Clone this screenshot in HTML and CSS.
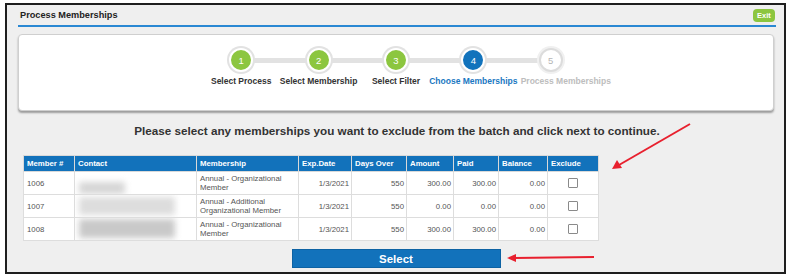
FILE: index.html
```html
<!DOCTYPE html>
<html>
<head>
    <title>Process Memberships</title>
    <link rel="stylesheet" href="styles.css">
</head>
<body>
<div class="frame">
    <!--title bar-->
    <div class="titlebar">
        <span class="title">Process Memberships</span>
        <a href="#" class="exit-btn">Exit</a>
    </div>

    <!--wizard steps-->
    <div class="wizard-panel">
        <ol class="steps">
            <li class="step done"><span class="dot">1</span><span class="label">Select Process</span></li>
            <li class="step done"><span class="dot">2</span><span class="label">Select Membership</span></li>
            <li class="step done"><span class="dot">3</span><span class="label">Select Filter</span></li>
            <li class="step current"><span class="dot">4</span><span class="label">Choose Memberships</span></li>
            <li class="step todo"><span class="dot">5</span><span class="label">Process Memberships</span></li>
        </ol>
    </div>

    <p class="instructions">Please select any memberships you want to exclude from the batch and click next to continue.</p>

    <table class="grid">
        <thead>
            <tr>
                <th class="c-num">Member #</th>
                <th class="c-contact">Contact</th>
                <th class="c-membership">Membership</th>
                <th class="c-date">Exp.Date</th>
                <th class="c-days">Days Over</th>
                <th class="c-amount">Amount</th>
                <th class="c-paid">Paid</th>
                <th class="c-balance">Balance</th>
                <th class="c-exclude">Exclude</th>
            </tr>
        </thead>
        <tbody>
            <tr>
                <td>1006</td>
                <td class="contact"><span class="smudge smudge-a"></span></td>
                <td>Annual - Organizational Member</td>
                <td class="right">1/3/2021</td>
                <td class="right">550</td>
                <td class="right">300.00</td>
                <td class="right">300.00</td>
                <td class="right">0.00</td>
                <td class="center"><span class="checkbox"></span></td>
            </tr>
            <tr>
                <td>1007</td>
                <td class="contact"><span class="smudge smudge-b"></span></td>
                <td>Annual - Additional Organizational Member</td>
                <td class="right">1/3/2021</td>
                <td class="right">550</td>
                <td class="right">0.00</td>
                <td class="right">0.00</td>
                <td class="right">0.00</td>
                <td class="center"><span class="checkbox"></span></td>
            </tr>
            <tr>
                <td>1008</td>
                <td class="contact"><span class="smudge smudge-c"></span></td>
                <td>Annual - Organizational Member</td>
                <td class="right">1/3/2021</td>
                <td class="right">550</td>
                <td class="right">300.00</td>
                <td class="right">300.00</td>
                <td class="right">0.00</td>
                <td class="center"><span class="checkbox"></span></td>
            </tr>
        </tbody>
    </table>

    <div class="actions">
        <button class="select-btn">Select</button>
    </div>
</div>

<!--red callout arrows drawn over the screenshot-->
<svg class="callouts" width="791" height="278" viewBox="0 0 791 278">
    <line x1="690" y1="124" x2="619" y2="165" stroke="#e8202e" stroke-width="2"/>
    <polygon points="612,169 617,160 622,168" fill="#e8202e"/>
    <line x1="594" y1="257" x2="514" y2="258" stroke="#e8202e" stroke-width="2"/>
    <polygon points="507,258 516,254 516,262" fill="#e8202e"/>
</svg>
</body>
</html>
```

FILE: styles.css
```css
/* page */
body {
    margin: 0;
    background-color: #ffffff;
    font-family: 'Liberation Sans', Arial, sans-serif;
    color: #333333;
    position: relative;
    width: 791px;
    height: 278px;
    overflow: hidden;
}

.frame {
    margin: 3px 5px 0 5px;
    height: 267px;
    border: 2px solid #1e1e1e;
    background-color: #efefef;
    padding: 0 8px 0 11px;
    display: flex;
    flex-direction: column;
}

/* title bar */
.titlebar {
    height: 20px;
    border-bottom: 2px solid #2a88d3;
    display: flex;
    justify-content: space-between;
    align-items: center;
}

.title {
    font-size: 9.2px;
    font-weight: bold;
    color: #222222;
    padding-left: 2px;
}

.exit-btn {
    margin-right: 1px;
    width: 22px;
    height: 13px;
    background-color: #8cc63f;
    border-radius: 4px;
    color: #ffffff;
    font-size: 7.5px;
    font-weight: bold;
    text-decoration: none;
    display: flex;
    justify-content: center;
    align-items: center;
}

/* wizard */
.wizard-panel {
    margin: 7px 2px 0 0;
    height: 75px;
    background-color: #ffffff;
    border: 1px solid #cfcfcf;
    border-radius: 4px;
    box-shadow: 0 2px 2px rgba(0, 0, 0, 0.35);
    display: flex;
    justify-content: center;
}

.steps {
    list-style: none;
    margin: 0;
    padding: 0;
    display: grid;
    grid-template-columns: repeat(5, 77.4px);
    padding-top: 13px;
}

.step {
    position: relative;
    display: flex;
    flex-direction: column;
    align-items: center;
}

/* connector bar between the dots */
.step + .step::before {
    content: "";
    position: absolute;
    top: 10px;
    left: -38.7px;
    width: 77.4px;
    height: 5px;
    background-color: #e2e2e2;
}

.dot {
    position: relative;
    z-index: 1;
    width: 20px;
    height: 20px;
    border-radius: 50%;
    border: 2px solid #ffffff;
    box-shadow: 0 0 0 2px #e2e2e2;
    display: flex;
    justify-content: center;
    align-items: center;
    font-size: 9.5px;
    color: #ffffff;
}

.label {
    margin-top: 4px;
    white-space: nowrap;
    font-size: 8.5px;
    font-weight: bold;
    color: #333333;
}

.done .dot {
    background-color: #8cc63f;
}

.current .dot {
    background-color: #1273bc;
}

.current .label {
    color: #1a78c2;
}

.todo .dot {
    background-color: #ffffff;
    border-color: #dcdcdc;
    box-shadow: 0 0 0 2px #f0f0f0;
    color: #b5b5b5;
}

.todo .label {
    color: #bdbdbd;
    padding-left: 30px;
}

/* instructions */
.instructions {
    margin: 13px 0 0;
    text-align: center;
    font-size: 11.7px;
    line-height: 14px;
    font-weight: bold;
    color: #333333;
}

/* memberships table */
.grid {
    margin: 17px 0 0 5px;
    border-collapse: collapse;
    font-size: 7.8px;
    color: #555555;
    background-color: #ffffff;
    table-layout: fixed;
    width: 575px;
}

.grid th,
.grid td {
    box-sizing: border-box;
}

.grid th {
    background-color: #1272bb;
    color: #ffffff;
    font-weight: bold;
    text-align: left;
    height: 16px;
    padding: 0 3px;
    border: 1px solid #d9d9d9;
}

.grid td {
    height: 23px;
    padding: 0 3px;
    border: 1px solid #dddddd;
    line-height: 9px;
    vertical-align: middle;
}

.c-num { width: 51px; }
.c-contact { width: 122px; }
.c-membership { width: 102px; }
.c-date { width: 53px; }
.c-days { width: 55px; }
.c-amount { width: 47px; }
.c-paid { width: 45px; }
.c-balance { width: 49px; }
.c-exclude { width: 51px; }

.grid td.right {
    text-align: right;
    padding-right: 2px;
}

.grid td.center {
    text-align: center;
}

.checkbox {
    display: inline-block;
    width: 8px;
    height: 8px;
    border: 1px solid #8a8a8a;
    border-radius: 1px;
    background-color: #ffffff;
    vertical-align: middle;
}

/* blurred contact names */
.contact {
    position: relative;
    overflow: hidden;
}

.smudge {
    position: absolute;
    left: 4px;
    filter: blur(3px);
}

.smudge-a {
    bottom: 0;
    width: 46px;
    height: 12px;
    background-color: #d6d6d6;
}

.smudge-b {
    top: 2px;
    width: 96px;
    height: 18px;
    background-color: #dddddd;
}

.smudge-c {
    top: 1px;
    width: 96px;
    height: 19px;
    background-color: #c9c9c9;
}

/* bottom button */
.actions {
    margin: 8px 2px 0 0;
    display: flex;
    justify-content: center;
}

.select-btn {
    width: 209px;
    height: 19px;
    background-color: #1272bb;
    border: 1px solid #0d62a3;
    color: #ffffff;
    font-family: 'Liberation Sans', Arial, sans-serif;
    font-size: 11.5px;
    font-weight: bold;
    padding: 0;
}

.callouts {
    position: absolute;
    top: 0;
    left: 0;
}
```
